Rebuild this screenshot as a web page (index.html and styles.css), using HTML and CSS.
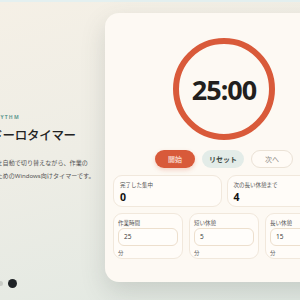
FILE: index.html
```html
<!DOCTYPE html>
<html lang="ja">
<head>
  <meta charset="UTF-8" />
  <meta name="viewport" content="width=device-width, initial-scale=1.0" />
  <title>ポモドーロタイマー</title>
  <link rel="stylesheet" href="styles.css">
</head>
<body>
  <div class="stage">
    <div class="layout">
      <div class="intro">
        <div class="intro-space"></div>
        <div class="intro-text">
          <p class="eyebrow">FOCUS RHYTHM</p>
          <h1>ポモドーロタイマー</h1>
          <p class="lead">作業と休憩を自動で切り替えながら、作業の<br>集中を保つためのWindows向けタイマーです。</p>
        </div>
        <div class="intro-space">
          <div class="dots">
            <span class="dot"></span>
            <span class="dot"></span>
            <span class="dot active"></span>
          </div>
        </div>
      </div>

      <div class="card">
        <div class="ring">
          <span class="time">25:00</span>
        </div>
        <div class="actions">
          <button class="btn btn-start">開始</button>
          <button class="btn btn-reset">リセット</button>
          <button class="btn btn-next">次へ</button>
        </div>
        <div class="stats">
          <div class="box">
            <div class="label">完了した集中</div>
            <div class="value">0</div>
          </div>
          <div class="box">
            <div class="label">次の長い休憩まで</div>
            <div class="value">4</div>
          </div>
        </div>
        <div class="settings">
          <div class="box setting">
            <div class="label">作業時間</div>
            <div class="field">25</div>
            <div class="unit">分</div>
          </div>
          <div class="box setting">
            <div class="label">短い休憩</div>
            <div class="field">5</div>
            <div class="unit">分</div>
          </div>
          <div class="box setting">
            <div class="label">長い休憩</div>
            <div class="field">15</div>
            <div class="unit">分</div>
          </div>
        </div>
      </div>
    </div>
  </div>
</body>
</html>
```

FILE: styles.css
```css
html, body {
  margin: 0;
  height: 100%;
  overflow: hidden;
}
body {
  font-family: "Noto Sans", "Noto Sans CJK JP", sans-serif;
  color: #222;
  background:
    linear-gradient(#e4f0f0, #e4f0f0) top / 100% 2px no-repeat,
    linear-gradient(165deg, #f5f0e6 0%, #eeede5 45%, #e1e8e2 100%);
}
.stage {
  display: flex;
  justify-content: center;
  align-items: center;
  height: 100%;
  padding-bottom: 5px;
  box-sizing: border-box;
}
.layout {
  flex: none;
  width: 386px;
  display: grid;
  grid-template-columns: 140px 238px;
  gap: 8px;
}
.intro {
  display: flex;
  flex-direction: column;
  padding-left: 9px;
}
.intro-space {
  flex: 1;
  display: flex;
  align-items: flex-end;
}
.eyebrow {
  margin: 0;
  font-size: 5px;
  font-weight: 700;
  letter-spacing: 1.2px;
  color: #5f9a92;
}
h1 {
  margin: 5px 0 12px;
  font-size: 12.5px;
  font-weight: 500;
  letter-spacing: -0.3px;
  color: #222;
}
.lead {
  margin: 0;
  font-size: 6.1px;
  line-height: 13px;
  color: #555;
}
.dots {
  display: flex;
  gap: 5px;
  margin-left: 22px;
  margin-bottom: -6px;
  align-items: center;
}
.dot {
  width: 5px;
  height: 5px;
  border-radius: 50%;
  background: #c9ccc6;
}
.dot.active {
  width: 9px;
  height: 9px;
  background: #1f2326;
}
.card {
  background: #fdf9f3;
  border-radius: 14px;
  box-shadow: 0 10px 24px rgba(70, 85, 75, 0.18);
  padding: 25px 8px 23px;
}
.ring {
  width: 90px;
  height: 90px;
  border: 6px solid #d95a3a;
  border-radius: 50%;
  margin: 0 auto;
  display: flex;
  align-items: center;
  justify-content: center;
}
.time {
  font-size: 27px;
  font-weight: 700;
  letter-spacing: -1px;
  color: #221f1d;
}
.actions {
  display: flex;
  justify-content: center;
  gap: 7px;
  margin-top: 10px;
}
.btn {
  font-family: inherit;
  height: 18px;
  width: 42px;
  border-radius: 9px;
  border: 1px solid transparent;
  font-size: 7px;
  font-weight: 700;
  padding: 0;
}
.btn-start {
  width: 40px;
  background: #d85a3a;
  color: #f6cfc1;
  box-shadow: 0 2px 4px rgba(216, 90, 58, 0.25);
}
.btn-reset {
  background: #e3ece8;
  color: #3d4a45;
}
.btn-next {
  background: #fffbf6;
  border-color: #ebe2d6;
  color: #8a8580;
  font-weight: 400;
}
.stats {
  display: grid;
  grid-template-columns: 1fr 1fr;
  gap: 5px;
  margin-top: 7px;
}
.box {
  background: #fffcf8;
  border: 1px solid #f1e8dc;
  border-radius: 9px;
  padding: 5px 6px;
}
.stats .box {
  height: 32px;
  box-sizing: border-box;
}
.label {
  font-size: 5.5px;
  line-height: 8px;
  color: #555;
}
.value {
  font-size: 10.5px;
  font-weight: 700;
  line-height: 14px;
  margin-top: 1px;
  color: #111;
}
.settings {
  display: grid;
  grid-template-columns: 1fr 1fr 1fr;
  gap: 6px;
  margin-top: 6px;
}
.setting {
  height: 46px;
  box-sizing: border-box;
  padding: 5px 4px 3px;
}
.field {
  height: 18px;
  box-sizing: border-box;
  margin-top: 1px;
  border: 1px solid #eddfcd;
  border-radius: 6px;
  background: #fffdfa;
  font-size: 6.5px;
  line-height: 16px;
  padding-left: 5px;
  color: #444;
}
.unit {
  font-size: 5.5px;
  line-height: 8px;
  margin-top: 3px;
  color: #666;
}
```
